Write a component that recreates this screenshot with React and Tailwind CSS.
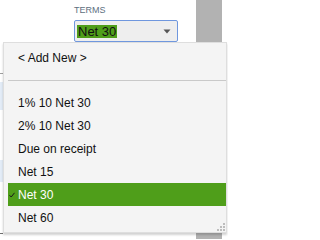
import React from "react";

const items = ["1% 10 Net 30", "2% 10 Net 30", "Due on receipt", "Net 15", "Net 30", "Net 60"];

export default function App() {
  return (
    <div className="relative w-[228px] h-[239px] overflow-hidden bg-white" style={{ fontFamily: '"Liberation Sans", Arial, sans-serif' }}>
      {/* background page */}
      <div className="flex h-full">
        <div className="w-[3px] h-full flex flex-col">
          <div className="h-[73px]" />
          <div className="h-px bg-[#a0a0a0]" />
          <div className="h-[8px]" />
          <div className="h-[28px] bg-[#e3ecf7]" />
          <div className="h-[50px]" />
          <div className="h-[22px] bg-[#e3ecf7]" />
          <div className="h-[51px]" />
          <div className="h-px bg-[#707070]" />
        </div>
        <div className="w-[193px] pl-[71px] pt-[5px] flex flex-col">
          <div className="text-[9px] leading-[11px] text-[#5d6f80]">TERMS</div>
          <div className="mt-[4px] w-[104px] h-[22px] rounded-[2px] border border-[#6f97de] bg-[#eeeeee] flex items-center pl-[2px] pr-[6px]">
            <span className="bg-[#4f9e1a] text-[13px] leading-[13px] text-[#111] px-px">Net 30</span>
            <svg className="ml-auto" width="8" height="5" viewBox="0 0 8 5">
              <path d="M0.5 0.5 L7.5 0.5 L4 4.5 Z" fill="#555" />
            </svg>
          </div>
        </div>
        <div className="w-[26px] h-full bg-[#b2b2b2]" />
      </div>

      {/* dropdown menu */}
      <div className="absolute left-[3px] top-[42px] w-[224px] h-[191px] bg-[#f4f4f4] border border-[#dedede] shadow-[0_2px_2px_rgba(0,0,0,0.18)] pl-[4px] pt-[3px] text-[12px] text-[#111]">
        <div className="h-[23px] flex items-center pl-[10px]">&lt; Add New &gt;</div>
        <div className="mt-[11px] h-px bg-[#c9c9c9]" />
        <div className="mt-[10px] flex flex-col">
          {items.map((t, i) => {
            const sel = t === "Net 30";
            return (
              <div key={i} className={sel ? "relative h-[23px] flex items-center pl-[10px] bg-[#4f9e1a] text-white" : "h-[23px] flex items-center pl-[10px]"}>
                {sel && (
                  <svg className="absolute left-[1px] top-[9px]" width="6" height="6" viewBox="0 0 6 6">
                    <path d="M0.5 3.2 L2.2 5 L5.5 0.8" stroke="#1a1a1a" strokeWidth="1" fill="none" />
                  </svg>
                )}
                {t}
              </div>
            );
          })}
        </div>
        <div className="absolute right-[1px] bottom-[1px] grid grid-cols-3 gap-[1px] w-[8px] h-[8px]">
          <span />
          <span />
          <span className="bg-[#bdbdbd]" />
          <span />
          <span className="bg-[#bdbdbd]" />
          <span className="bg-[#bdbdbd]" />
          <span className="bg-[#bdbdbd]" />
          <span className="bg-[#bdbdbd]" />
          <span className="bg-[#bdbdbd]" />
        </div>
      </div>
    </div>
  );
}
